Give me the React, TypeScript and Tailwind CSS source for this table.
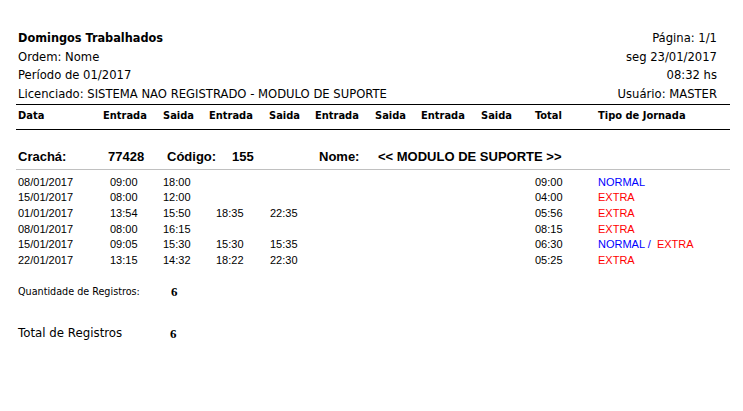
const tahoma = "font-['DejaVu_Sans_Condensed',sans-serif]"
const arial = "font-['Liberation_Sans',Arial,sans-serif]"
const verdana = "font-['DejaVu_Sans',sans-serif]"

const HEAD = [
  ['Data', 'w-[85px]'],
  ['Entrada', 'w-[60px]'],
  ['Saida', 'w-[46px]'],
  ['Entrada', 'w-[60px]'],
  ['Saida', 'w-[46px]'],
  ['Entrada', 'w-[60px]'],
  ['Saida', 'w-[46px]'],
  ['Entrada', 'w-[60px]'],
  ['Saida', 'w-[54px]'],
  ['Total', 'w-[63px]'],
  ['Tipo de Jornada', 'flex-1'],
]

type Row = { date: string; times: string[]; total: string; tipo: ('N' | 'E')[] }

const ROWS: Row[] = [
  { date: '08/01/2017', times: ['09:00', '18:00', '', ''], total: '09:00', tipo: ['N'] },
  { date: '15/01/2017', times: ['08:00', '12:00', '', ''], total: '04:00', tipo: ['E'] },
  { date: '01/01/2017', times: ['13:54', '15:50', '18:35', '22:35'], total: '05:56', tipo: ['E'] },
  { date: '08/01/2017', times: ['08:00', '16:15', '', ''], total: '08:15', tipo: ['E'] },
  { date: '15/01/2017', times: ['09:05', '15:30', '15:30', '15:35'], total: '06:30', tipo: ['N', 'E'] },
  { date: '22/01/2017', times: ['13:15', '14:32', '18:22', '22:30'], total: '05:25', tipo: ['E'] },
]

const timeW = ['w-[53px]', 'w-[53px]', 'w-[54px]', 'w-[265px]']

export default function App() {
  return (
    <div className={`w-[743px] h-[411px] bg-white text-black pl-[16px] pr-[13px] pt-[28px] ${tahoma}`}>
      {/* cabeçalho */}
      <div className={`pl-[2px] pr-[13px] text-[11.6px] ${verdana}`}>
        <div className="flex justify-between items-center h-[21px]">
          <span className={`font-bold text-[12.6px] ${tahoma}`}>Domingos Trabalhados</span>
          <span>Página: 1/1</span>
        </div>
        <div className="flex justify-between items-center h-[18px]">
          <span>Ordem: Nome</span>
          <span>seg 23/01/2017</span>
        </div>
        <div className="flex justify-between items-center h-[18px]">
          <span>Período de 01/2017</span>
          <span>08:32 hs</span>
        </div>
        <div className="flex justify-between items-center h-[19px]">
          <span>Licenciado: SISTEMA NAO REGISTRADO - MODULO DE SUPORTE</span>
          <span>Usuário: MASTER</span>
        </div>
      </div>
      <div className="border-t-[1.5px] border-black" />
      <div className="flex items-start h-[25px] pt-[4px] pl-[2px] text-[11px] font-bold leading-[13px] border-b-[1.5px] border-black">
        {HEAD.map(([label, w], i) => (
          <span key={i} className={w}>{label}</span>
        ))}
      </div>

      {/* funcionário */}
      <div className={`flex items-center mt-[15px] h-[25px] pl-[2px] text-[13px] font-bold border-b border-[#c0c0c0] ${arial}`}>
        <span className="w-[90px]">Crachá:</span>
        <span className="w-[59px]">77428</span>
        <span className="w-[65px]">Código:</span>
        <span className="w-[87px]">155</span>
        <span className="w-[59px]">Nome:</span>
        <span>&lt;&lt; MODULO DE SUPORTE &gt;&gt;</span>
      </div>

      <div className={`mt-[4px] pl-[2px] text-[11px] ${arial}`}>
        {ROWS.map((r, i) => (
          <div key={i} className="flex items-center h-[15.7px]">
            <span className="w-[92px]">{r.date}</span>
            {r.times.map((t, j) => (
              <span key={j} className={timeW[j]}>{t}</span>
            ))}
            <span className="w-[63px]">{r.total}</span>
            <span className="whitespace-pre">
              {r.tipo.map((t, k) => (
                <span key={k}>
                  {k > 0 && <span className="text-[#0000ff]"> /  </span>}
                  <span className={t === 'N' ? 'text-[#0000ff]' : 'text-[#ff0000]'}>
                    {t === 'N' ? 'NORMAL' : 'EXTRA'}
                  </span>
                </span>
              ))}
            </span>
          </div>
        ))}
      </div>

      <div className="flex items-center mt-[16px] h-[16px] pl-[2px]">
        <span className="w-[153px] text-[10.7px]">Quantidade de Registros:</span>
        <span className="font-bold text-[13px] font-['Liberation_Serif',serif]">6</span>
      </div>
      <div className="flex items-center mt-[26px] h-[16px] pl-[2px]">
        <span className={`w-[152px] text-[11.8px] ${verdana}`}>Total de Registros</span>
        <span className="font-bold text-[13px] font-['Liberation_Serif',serif]">6</span>
      </div>
    </div>
  )
}
